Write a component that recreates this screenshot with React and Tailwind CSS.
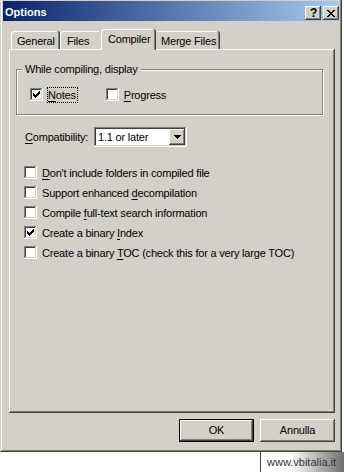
import React from "react";

const raised =
  "shadow-[inset_-1px_-1px_#404040,inset_1px_1px_#ffffff,inset_-2px_-2px_#808080]";
const sunken =
  "shadow-[inset_-1px_-1px_#ffffff,inset_1px_1px_#808080,inset_-2px_-2px_#D4D0C8,inset_2px_2px_#404040]";
const tabBase =
  "flex justify-start items-start pt-[4px] leading-[13px] rounded-t-[3px] shadow-[inset_-1px_0_#404040,inset_1px_1px_#ffffff,inset_-2px_0_#808080] whitespace-nowrap";

function CheckMark() {
  return (
    <svg
      width="7"
      height="7"
      viewBox="0 0 7 7"
      shapeRendering="crispEdges"
      className="absolute left-[3px] top-[3px]"
    >
      <rect x="6" y="0" width="1" height="1" />
      <rect x="5" y="1" width="2" height="1" />
      <rect x="0" y="2" width="1" height="1" />
      <rect x="4" y="2" width="3" height="1" />
      <rect x="0" y="3" width="2" height="1" />
      <rect x="3" y="3" width="3" height="1" />
      <rect x="0" y="4" width="5" height="1" />
      <rect x="1" y="5" width="3" height="1" />
      <rect x="2" y="6" width="1" height="1" />
    </svg>
  );
}

function Box({ checked, className = "" }) {
  return (
    <span
      className={`relative block w-[13px] h-[13px] shrink-0 bg-white ${sunken} ${className}`}
    >
      {checked && <CheckMark />}
    </span>
  );
}

function U({ children }) {
  return <span className="underline underline-offset-2 decoration-1">{children}</span>;
}

function CloseGlyph() {
  return (
    <svg width="8" height="7" viewBox="0 0 8 7" shapeRendering="crispEdges">
      <rect x="0" y="0" width="2" height="1" />
      <rect x="6" y="0" width="2" height="1" />
      <rect x="1" y="1" width="2" height="1" />
      <rect x="5" y="1" width="2" height="1" />
      <rect x="2" y="2" width="4" height="1" />
      <rect x="3" y="3" width="2" height="1" />
      <rect x="2" y="4" width="4" height="1" />
      <rect x="1" y="5" width="2" height="1" />
      <rect x="5" y="5" width="2" height="1" />
      <rect x="0" y="6" width="2" height="1" />
      <rect x="6" y="6" width="2" height="1" />
    </svg>
  );
}

function DownArrow() {
  return (
    <svg width="7" height="4" viewBox="0 0 7 4" shapeRendering="crispEdges">
      <rect x="0" y="0" width="7" height="1" />
      <rect x="1" y="1" width="5" height="1" />
      <rect x="2" y="2" width="3" height="1" />
      <rect x="3" y="3" width="1" height="1" />
    </svg>
  );
}

const rows = [
  { c: false, label: (<><U>D</U>on't include folders in compiled file</>) },
  { c: false, label: (<>Support enhanced <U>d</U>ecompilation</>) },
  { c: false, label: (<>Compile <U>f</U>ull-text search information</>) },
  { c: true, label: (<>Create a binary <U>I</U>ndex</>) },
  { c: false, label: (<>Create a binary <U>T</U>OC (check this for a very large TOC)</>) },
];

export default function App() {
  return (
    <div className="w-[344px] h-[472px] bg-white flex flex-col [font-family:'Liberation_Sans',Arial,sans-serif] text-[11px] text-black">
      <div className="w-[342px] h-[452px] shrink-0 border-l border-r border-b border-l-[#D4D0C8] border-r-[#404040] border-b-[#404040] tracking-[-0.2px]">
        <div className="h-full bg-[#D4D0C8] border-l border-r border-b border-l-white border-r-[#808080] border-b-[#808080] px-[1px] pt-[1px] flex flex-col">
          {/* Title bar */}
          <div className="h-[20px] shrink-0 flex items-start pl-[2px] bg-[linear-gradient(to_right,#0A246A,#A6CAF0)]">
            <span className="mt-[5px] font-bold text-white leading-[13px] tracking-normal">Options</span>
            <div className="ml-auto mt-[5px] flex gap-[2px]">
              <div className={`w-[16px] h-[14px] bg-[#D4D0C8] ${raised} flex items-center justify-center font-bold text-[12px] leading-[14px] pl-[1px]`}>
                ?
              </div>
              <div className={`w-[16px] h-[14px] bg-[#D4D0C8] ${raised} flex items-center justify-center`}>
                <CloseGlyph />
              </div>
            </div>
          </div>

          {/* Body */}
          <div className="pl-[6px] pr-[4px] flex flex-col">
            {/* Tabs */}
            <div className="mt-[8px] h-[20px] flex items-end pl-[2px]">
              <div className={`${tabBase} w-[49px] h-[18px] pl-[6px]`}>General</div>
              <div className={`${tabBase} w-[43px] h-[18px] pl-[7px]`}>Files</div>
              <div className={`${tabBase} relative z-10 w-[55px] h-[21px] -mx-[2px] -mb-[1px] bg-[#D4D0C8] pl-[7px]`}>
                Compiler
              </div>
              <div className={`${tabBase} w-[66px] h-[18px] pl-[7px]`}>Merge Files</div>
            </div>

            {/* Panel */}
            <div className={`h-[364px] flex flex-col ${raised}`}>
              {/* Group box */}
              <div className="ml-[7px] mt-[20px] relative w-[307px] h-[46px] border border-[#808080] shadow-[1px_1px_0_#ffffff,inset_1px_1px_0_#ffffff]">
                <span className="absolute left-[5px] top-[-7px] px-[3px] leading-[13px] bg-[#D4D0C8] whitespace-nowrap">
                  While compiling, display
                </span>
                <div className="ml-[13px] mt-[17px] flex items-start">
                  <Box checked className="mt-[1px]" />
                  <span className="ml-[4px] border border-dotted border-black leading-[14px] pr-[1px]">
                    <U>N</U>otes
                  </span>
                  <Box className="ml-[28px] mt-[1px]" />
                  <span className="ml-[4px] border border-transparent leading-[14px]">
                    <U>P</U>rogress
                  </span>
                </div>
              </div>

              {/* Compatibility */}
              <div className="ml-[16px] mt-[12px] flex h-[20px] items-center">
                <span className="w-[69px] leading-[20px]">
                  <U>C</U>ompatibility:
                </span>
                <div className={`w-[93px] h-[20px] bg-white ${sunken} flex items-center pl-[4px] pr-[2px]`}>
                  <span className="flex-1 leading-[16px]">1.1 or later</span>
                  <div className={`w-[16px] h-[16px] bg-[#D4D0C8] ${raised} flex items-center justify-center`}>
                    <DownArrow />
                  </div>
                </div>
              </div>

              {/* Check list */}
              <div className="ml-[15px] mt-[16px] flex flex-col">
                {rows.map((r, i) => (
                  <div key={i} className="h-[20px] flex items-start">
                    <Box checked={r.c} className="mt-[3px]" />
                    <span className="ml-[5px] leading-[20px] whitespace-nowrap">{r.label}</span>
                  </div>
                ))}
              </div>
            </div>

            {/* Buttons */}
            <div className="mt-[6px] flex justify-end gap-[6px]">
              <div className={`w-[75px] h-[23px] border border-black bg-[#D4D0C8] ${raised} flex items-center justify-center`}>
                OK
              </div>
              <div className={`w-[75px] h-[23px] bg-[#D4D0C8] ${raised} flex items-center justify-center`}>
                Annulla
              </div>
            </div>
          </div>
        </div>
      </div>

      {/* Watermark badge */}
      <div className="flex justify-end">
        <div className="w-[84px] h-[20px] border-l border-[#404040] bg-[linear-gradient(to_right,#ffffff,#ffffff_35%,#707070)] flex items-center pl-[6px] text-[#333333] leading-[20px] whitespace-nowrap">
          www.vbitalia.it
        </div>
      </div>
    </div>
  );
}
